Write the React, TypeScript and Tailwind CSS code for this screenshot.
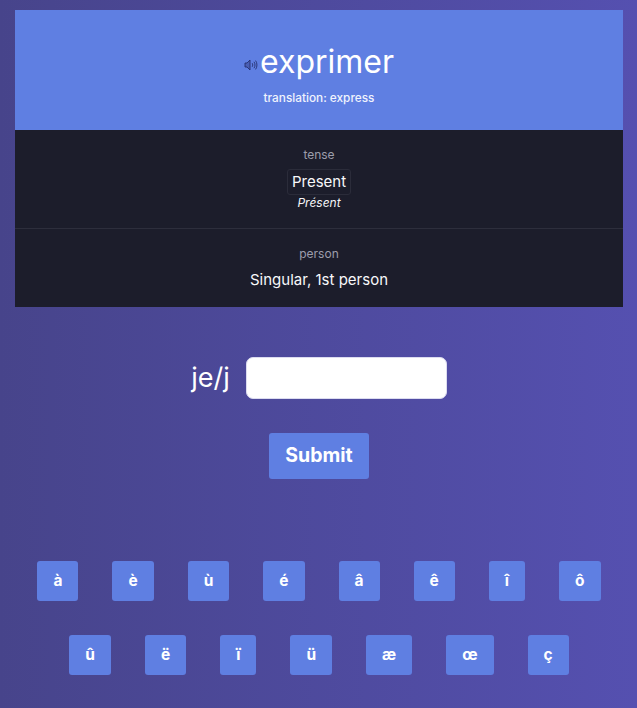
const ROW_ONE = ['à', 'è', 'ù', 'é', 'â', 'ê', 'î', 'ô'];
const ROW_TWO = ['û', 'ë', 'ï', 'ü', 'æ', 'œ', 'ç'];

function SpeakerIcon() {
  return (
    <svg width="14" height="14" viewBox="0 0 14 14" fill="none" stroke="#26306e" strokeWidth="0.9" className="mr-[2px] mt-[5px] shrink-0">
      <path d="M1 5h2l3-3v10L3 9H1z" fill="#4a5fb4" />
      <path d="M8.2 5.2c.7 1 .7 2.6 0 3.6" />
      <path d="M10 3.8c1.3 1.8 1.3 4.6 0 6.4" />
      <path d="M11.6 2.6c1.8 2.5 1.8 6.3 0 8.8" />
    </svg>
  );
}

function AccentKey({ char }: { char: string }) {
  return (
    <button className="h-10 px-4 rounded-[3px] bg-[#5f7fe2] text-white text-[15.5px] font-bold flex items-center justify-center">
      {char}
    </button>
  );
}

export default function App() {
  return (
    <div className="w-full h-[708px] overflow-hidden bg-gradient-to-r from-[#47448b] to-[#5550b0] pl-[15px] pr-[14px] pt-2.5 font-['Inter',sans-serif] text-white">
      {/* Verb header */}
      <div className="h-[120px] bg-[#5f7fe2] flex flex-col items-center pt-[31px]">
        <div className="flex items-center justify-center">
          <SpeakerIcon />
          <span className="text-[32px] leading-[42px] font-normal">exprimer</span>
        </div>
        <p className="text-[11.8px] leading-4 font-medium mt-[7px] text-[#f0f3fd]">translation: express</p>
      </div>

      {/* Tense and person */}
      <div className="h-[177px] bg-[#1c1d2b] flex flex-col items-center">
        <div className="w-full h-[99px] border-b border-[#2d2e3c] flex flex-col items-center pt-[17px]">
          <p className="text-xs leading-4 text-[#9c9dab]">tense</p>
          <span className="mt-[6px] px-1 h-[26px] border border-[#2b2c3a] rounded-[3px] text-[15px] leading-6 text-[#f8f8fa]">Present</span>
          <p className="text-xs leading-4 italic text-[#f5f5f8] mt-0">Présent</p>
        </div>
        <p className="text-xs leading-4 text-[#9c9dab] mt-[17px]">person</p>
        <p className="text-[15px] leading-6 text-[#f8f8fa] mt-[6px]">Singular, 1st person</p>
      </div>

      {/* Answer form */}
      <div className="flex items-center justify-center gap-[16px] mt-[50px]">
        <label className="text-[27px] leading-[42px]">je/j</label>
        <input className="w-[201px] h-[42px] rounded-[7px] bg-white border border-[#dcdcf0]" />
      </div>
      <div className="flex justify-center mt-[34px]">
        <button className="h-[46px] w-[100px] rounded-[3px] bg-[#5f7fe2] text-[19.5px] font-bold">Submit</button>
      </div>

      {/* Accent keys */}
      <div className="flex flex-col items-center gap-[34px] mt-[82px]">
        <div className="flex justify-center gap-[34px]">
          {ROW_ONE.map((c) => <AccentKey key={c} char={c} />)}
        </div>
        <div className="flex justify-center gap-[34px]">
          {ROW_TWO.map((c) => <AccentKey key={c} char={c} />)}
        </div>
      </div>
    </div>
  );
}
